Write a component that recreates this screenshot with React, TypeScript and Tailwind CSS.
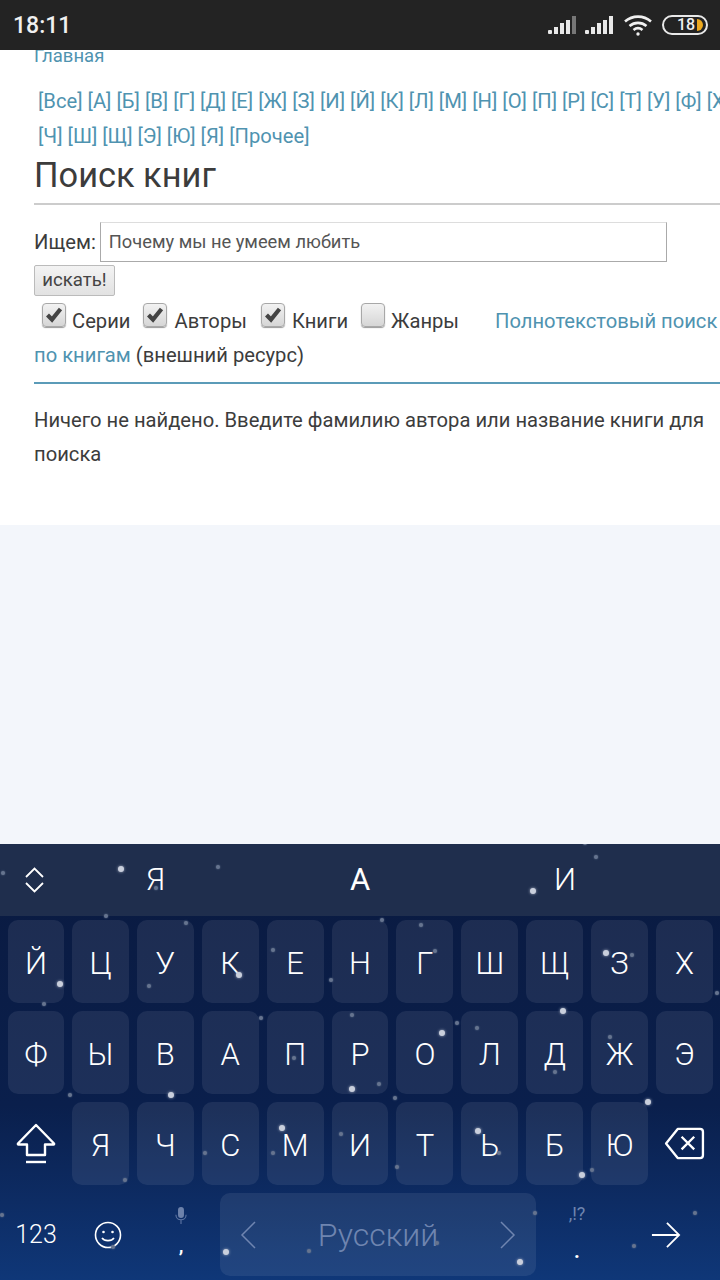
const rowOne = ['Все', 'А', 'Б', 'В', 'Г', 'Д', 'Е', 'Ж', 'З', 'И', 'Й', 'К', 'Л', 'М', 'Н', 'О', 'П', 'Р', 'С', 'Т', 'У', 'Ф', 'Х']
const rowTwo = ['Ч', 'Ш', 'Щ', 'Э', 'Ю', 'Я', 'Прочее']

const bigStars = [
  [121, 869], [60, 984], [239, 975], [533, 891], [606, 953], [563, 1011], [442, 1033],
  [171, 1095], [352, 1089], [282, 1128], [478, 1131], [648, 1102], [582, 1175], [226, 1252], [520, 1262],
]
const smallStars = [
  [3, 873], [218, 867], [156, 888], [106, 916], [186, 923], [44, 1004], [149, 986], [273, 950],
  [331, 980], [261, 1018], [352, 1015], [294, 1058], [382, 920], [421, 925], [435, 951], [632, 955],
  [717, 993], [457, 1023], [477, 1028], [610, 1037], [585, 843], [596, 857], [70, 1095], [125, 1180],
  [205, 1153], [273, 1153], [341, 1134], [395, 1098], [379, 1084], [397, 1167], [499, 1153], [592, 1170],
  [535, 1213], [437, 1243], [309, 1251], [2, 1215], [695, 1213], [634, 1246], [113, 1247], [555, 1072],
]

function Bars({ faded }: { faded?: boolean }) {
  return (
    <svg width="30" height="20" viewBox="0 0 30 20" fill="#e8e8e8">
      <rect x="0" y="15" width="4" height="4" rx="1" />
      <rect x="6" y="12" width="4" height="7" />
      <rect x="12" y="8" width="4" height="11" />
      <rect x="18" y="5" width="4" height="14" />
      <rect x="24" y="1" width="4" height="18" fill={faded ? '#777' : '#e8e8e8'} />
    </svg>
  )
}

function StatusBar() {
  return (
    <div className="h-[50px] bg-[#232323] flex items-center pl-[13px] pr-[12px] shrink-0 relative z-10">
      <span className="text-[23px] font-medium text-[#f0f0f0] mt-[2px]">18:11</span>
      <div className="ml-auto flex items-center">
        <Bars faded />
        <div className="ml-[7px]"><Bars /></div>
        <svg className="ml-[8px]" width="30" height="24" viewBox="0 0 30 24" fill="none" stroke="#f0f0f0" strokeWidth="2.6">
          <path d="M2 8.5C9.5 2 20.5 2 28 8.5" />
          <path d="M6.5 13C11.5 8.8 18.5 8.8 23.5 13" />
          <path d="M10.5 17C13.2 14.8 16.8 14.8 19.5 17" />
          <circle cx="15" cy="21" r="1.7" fill="#f0f0f0" stroke="none" />
        </svg>
        <div className="ml-[9px] w-[46px] h-[20px] rounded-full border-2 border-[#e8e8e8] flex items-center overflow-hidden">
          <span className="ml-[13px] text-[16px] leading-none font-medium text-[#f0f0f0]">18</span>
          <span className="ml-[2px] w-[6px] h-[12px] rounded-r-full bg-[#eda91f]"></span>
        </div>
      </div>
    </div>
  )
}

function Check({ checked }: { checked?: boolean }) {
  return (
    <span className="w-[24px] h-[24px] rounded-[4px] border border-[#a8a8a8] bg-gradient-to-b from-[#f2f2f2] to-[#d6d6d6] shadow-[0_1px_1px_#999] flex items-center justify-center shrink-0">
      {checked && (
        <svg width="18" height="16" viewBox="0 0 18 16">
          <path d="M2.5 8L7 12.5L15.5 2" fill="none" stroke="#444" strokeWidth="4.2" />
        </svg>
      )}
    </span>
  )
}

function Option({ label, checked, ml, gap }: { label: string; checked?: boolean; ml: string; gap: string }) {
  return (
    <div className={`flex items-start ${ml}`}>
      <div className="mt-[-10px]"><Check checked={checked} /></div>
      <span className={`${gap} leading-[34px] mt-[-9px]`}>{label}</span>
    </div>
  )
}

function Page() {
  return (
    <div className="flex-1 bg-[#f3f6fb] overflow-hidden">
      <div className="h-[475px] bg-white overflow-hidden pl-[34px] text-[20.2px] text-[#3c3c3c]">
        <a className="block text-[18.5px] leading-[22px] mt-[-5px] text-[#4f93b0]">Главная</a>
        <div className="mt-[17px] pl-[4px] text-[20.2px] leading-[35px] text-[#4f93b0] whitespace-nowrap">
          <div>{rowOne.map((l) => `[${l}]`).join(' ')}</div>
          <div>{rowTwo.map((l) => `[${l}]`).join(' ')}</div>
        </div>
        <h1 className="text-[34.4px] leading-[40px] font-normal mt-[1px]">Поиск книг</h1>
        <div className="h-[2px] bg-[#ccc] mt-[8px]"></div>
        <div className="flex items-center mt-[17px]">
          <span>Ищем:</span>
          <div className="ml-[4px] w-[567px] h-[40px] border border-[#aaa] border-t-[#ddd] pl-[8px] flex items-center text-[18.3px] text-[#555]">
            Почему мы не умеем любить
          </div>
        </div>
        <button className="block mt-[3px] w-[81px] h-[31px] border border-[#bbb] rounded-[2px] bg-gradient-to-b from-[#f3f3f3] to-[#e2e2e2] text-[18.6px] text-[#444]">
          искать!
        </button>
        <div className="flex mt-[17px] h-[24px] whitespace-nowrap">
          <Option label="Серии" checked ml="ml-[8px]" gap="ml-[6px]" />
          <Option label="Авторы" checked ml="ml-[13px]" gap="ml-[7px]" />
          <Option label="Книги" checked ml="ml-[14px]" gap="ml-[7px]" />
          <Option label="Жанры" ml="ml-[13px]" gap="ml-[6px]" />
          <a className="ml-[36px] leading-[34px] mt-[-9px] text-[#4f93b0]">Полнотекстовый поиск</a>
        </div>
        <div className="leading-[34px] mt-[1px]">
          <a className="text-[#4f93b0]">по книгам</a> (внешний ресурс)
        </div>
        <div className="h-[2px] bg-[#5b9bb8] mt-[10px]"></div>
        <p className="leading-[34px] mt-[19px] pr-[10px]">
          Ничего не найдено. Введите фамилию автора или название книги для поиска
        </p>
      </div>
    </div>
  )
}

function Key({ label, first }: { label: string; first?: boolean }) {
  return (
    <div className={`${first ? 'w-[56px]' : 'w-[56.9px]'} h-[83px] pt-[6px] rounded-[10px] bg-white/[0.08] flex items-center justify-center text-[31px] font-light text-white`}>
      {label}
    </div>
  )
}

function Keyboard() {
  return (
    <div className="h-[436px] shrink-0 relative overflow-hidden bg-gradient-to-b from-[#0a1a40] via-[#0a1f4c] via-60% to-[#0f3778]">
      <div className="h-[72px] bg-[#1f2e4d] flex items-center text-white relative">
        <svg className="ml-[24px]" width="21" height="28" viewBox="0 0 21 28" fill="none" stroke="#fff" strokeWidth="1.8">
          <path d="M2 11L10.5 2.5L19 11" />
          <path d="M2 17L10.5 25.5L19 17" />
        </svg>
        <span className="absolute left-[146px] text-[31px] font-light">Я</span>
        <span className="absolute left-[350px] text-[31px]">А</span>
        <span className="absolute left-[554px] text-[31px] font-light">И</span>
      </div>
      <div className="flex flex-col gap-[8px] pt-[4px] pl-[8px]">
        <div className="flex gap-[8px]">
          {['Й', 'Ц', 'У', 'К', 'Е', 'Н', 'Г', 'Ш', 'Щ', 'З', 'Х'].map((l, i) => <Key key={l} label={l} first={i === 0} />)}
        </div>
        <div className="flex gap-[8px]">
          {['Ф', 'Ы', 'В', 'А', 'П', 'Р', 'О', 'Л', 'Д', 'Ж', 'Э'].map((l, i) => <Key key={l} label={l} first={i === 0} />)}
        </div>
        <div className="flex gap-[8px] items-center">
          <div className="w-[56px] flex justify-center">
            <svg width="42" height="42" viewBox="0 0 42 42" fill="none" stroke="#fff" strokeWidth="2.4">
              <path d="M21 2L39 20.5a.6.6 0 0 1-.5 1H30V32H12V21.5H3.5a.6.6 0 0 1-.5-1Z" strokeLinejoin="round" />
              <path d="M11 39H31" />
            </svg>
          </div>
          {['Я', 'Ч', 'С', 'М', 'И', 'Т', 'Ь', 'Б', 'Ю'].map((l) => <Key key={l} label={l} />)}
          <div className="w-[56px] flex justify-center">
            <svg width="41" height="33" viewBox="0 0 42 34" fill="none" stroke="#fff" strokeWidth="2.4">
              <path d="M14 2H37a3 3 0 0 1 3 3V29a3 3 0 0 1-3 3H14L2 17Z" strokeLinejoin="round" />
              <path d="M18 10L31 23M31 10L18 23" />
            </svg>
          </div>
        </div>
        <div className="flex items-center h-[83px] text-white">
          <span className="w-[56px] text-center text-[25px] font-light">123</span>
          <div className="w-[88px] flex justify-center">
            <svg width="28" height="28" viewBox="0 0 28 28" fill="none" stroke="#fff" strokeWidth="1.6">
              <circle cx="14" cy="14" r="12.5" />
              <circle cx="9.5" cy="11" r="1.3" fill="#fff" stroke="none" />
              <circle cx="18.5" cy="11" r="1.3" fill="#fff" stroke="none" />
              <path d="M8 17C10.5 20.5 17.5 20.5 20 17" />
            </svg>
          </div>
          <div className="w-[58px] h-full flex flex-col items-center text-white">
            <svg className="mt-[14px]" width="12" height="17" viewBox="0 0 14 20" fill="none" stroke="#5f76a3" strokeWidth="1.3">
              <rect x="3.5" y="0" width="7" height="13" rx="3.5" fill="#6d82ab" stroke="none" />
              <path d="M1 9C1 17 13 17 13 9M7 15V20" />
            </svg>
            <span className="text-[21px] leading-[24px] mt-[9px] font-medium">,</span>
          </div>
          <div className="ml-[10px] w-[316px] h-[83px] rounded-[10px] bg-white/[0.08] flex items-center justify-between px-[20px]">
            <svg width="16" height="28" viewBox="0 0 16 28" fill="none" stroke="#6f85b0" strokeWidth="1.5"><path d="M15 1L2 14L15 27" /></svg>
            <span className="text-[32px] font-light text-[#6f85b0]">Русский</span>
            <svg width="16" height="28" viewBox="0 0 16 28" fill="none" stroke="#6f85b0" strokeWidth="1.5"><path d="M1 1L14 14L1 27" /></svg>
          </div>
          <div className="w-[82px] h-full flex flex-col items-center">
            <span className="text-[18px] leading-[18px] text-[#6f85b0] mt-[12px]">,!?</span>
            <span className="text-[20px] leading-[20px] mt-[18px] font-bold">.</span>
          </div>
          <div className="ml-[25px] w-[46px] flex justify-center">
            <svg width="30" height="28" viewBox="0 0 32 28" fill="none" stroke="#fff" strokeWidth="1.9"><path d="M1 14H30M17 1L30 14L17 27" /></svg>
          </div>
        </div>
      </div>
      {bigStars.map(([x, y]) => (
        <span key={`${x}-${y}`} className="absolute w-[6px] h-[6px] rounded-full bg-[#c9cfdc] shadow-[0_0_3px_#a9b1c4]" style={{ left: x - 3, top: y - 847 }} />
      ))}
      {smallStars.map(([x, y]) => (
        <span key={`${x}-${y}`} className="absolute w-[4px] h-[4px] rounded-full bg-[#66748f] shadow-[0_0_2px_#66748f]" style={{ left: x - 2, top: y - 846 }} />
      ))}
    </div>
  )
}

export default function App() {
  return (
    <div className="w-[720px] h-[1280px] flex flex-col overflow-hidden antialiased font-['Roboto',sans-serif]">
      <StatusBar />
      <Page />
      <Keyboard />
    </div>
  )
}
